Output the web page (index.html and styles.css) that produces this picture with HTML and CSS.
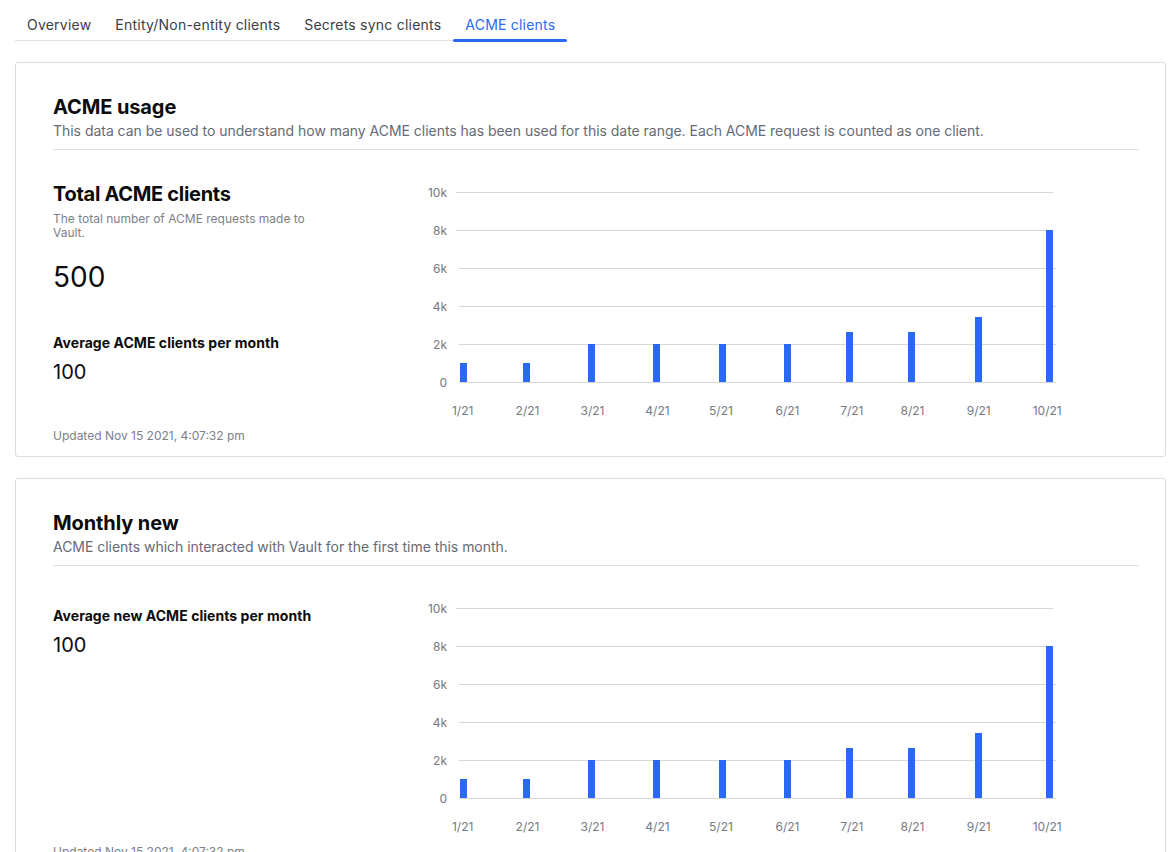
FILE: index.html
```html
<!DOCTYPE html>
<html lang="en">
<head>
<meta charset="utf-8">
<title>ACME clients</title>
<link rel="stylesheet" href="styles.css">
</head>
<body>
<div class="page">
  <nav class="tabs">
    <a class="tab">Overview</a>
    <a class="tab">Entity/Non-entity clients</a>
    <a class="tab">Secrets sync clients</a>
    <a class="tab active">ACME clients</a>
  </nav>

  <section class="card">
    <header class="card-head">
      <h2 class="card-title">ACME usage</h2>
      <p class="card-desc">This data can be used to understand how many ACME clients has been used for this date range. Each ACME request is counted as one client.</p>
    </header>
    <div class="card-body">
      <div class="stats">
        <h3 class="stat-title">Total ACME clients</h3>
        <p class="stat-desc">The total number of ACME requests made to Vault.</p>
        <p class="stat-big">500</p>
        <p class="stat-label">Average ACME clients per month</p>
        <p class="stat-value">100</p>
      </div>
      <svg class="chart" width="660" height="240" viewBox="0 0 660 240">
        <g class="grid">
          <line x1="36" y1="12.5" x2="633" y2="12.5"/>
          <line x1="36" y1="50.5" x2="633" y2="50.5"/>
          <line x1="39" y1="88.5" x2="636" y2="88.5"/>
          <line x1="39" y1="126.5" x2="636" y2="126.5"/>
          <line x1="39" y1="164.5" x2="636" y2="164.5"/>
          <line x1="39" y1="202.5" x2="636" y2="202.5"/>
        </g>
        <g class="ylab">
          <text x="27" y="17">10k</text>
          <text x="27" y="55">8k</text>
          <text x="27" y="93">6k</text>
          <text x="27" y="131">4k</text>
          <text x="27" y="169">2k</text>
          <text x="27" y="207">0</text>
        </g>
        <g class="bars">
          <rect x="40" y="183" width="7" height="19"/>
          <rect x="103" y="183" width="7" height="19"/>
          <rect x="168" y="164" width="7" height="38"/>
          <rect x="233" y="164" width="7" height="38"/>
          <rect x="299" y="164" width="7" height="38"/>
          <rect x="364" y="164" width="7" height="38"/>
          <rect x="426" y="152" width="7" height="50"/>
          <rect x="488" y="152" width="7" height="50"/>
          <rect x="555" y="137" width="7" height="65"/>
          <rect x="626" y="50" width="7" height="152"/>
        </g>
        <g class="xlab">
          <text x="42.7" y="234.5">1/21</text>
          <text x="107.5" y="234.5">2/21</text>
          <text x="172.5" y="234.5">3/21</text>
          <text x="237.5" y="234.5">4/21</text>
          <text x="301" y="234.5">5/21</text>
          <text x="367.5" y="234.5">6/21</text>
          <text x="431.8" y="234.5">7/21</text>
          <text x="492.5" y="234.5">8/21</text>
          <text x="558.7" y="234.5">9/21</text>
          <text x="627.2" y="234.5">10/21</text>
        </g>
      </svg>
    </div>
    <p class="updated">Updated Nov 15 2021, 4:07:32 pm</p>
  </section>

  <section class="card">
    <header class="card-head">
      <h2 class="card-title">Monthly new</h2>
      <p class="card-desc">ACME clients which interacted with Vault for the first time this month.</p>
    </header>
    <div class="card-body">
      <div class="stats">
        <p class="stat-label first">Average new ACME clients per month</p>
        <p class="stat-value">100</p>
      </div>
      <svg class="chart" width="660" height="240" viewBox="0 0 660 240">
        <g class="grid">
          <line x1="36" y1="12.5" x2="633" y2="12.5"/>
          <line x1="36" y1="50.5" x2="633" y2="50.5"/>
          <line x1="39" y1="88.5" x2="636" y2="88.5"/>
          <line x1="39" y1="126.5" x2="636" y2="126.5"/>
          <line x1="39" y1="164.5" x2="636" y2="164.5"/>
          <line x1="39" y1="202.5" x2="636" y2="202.5"/>
        </g>
        <g class="ylab">
          <text x="27" y="17">10k</text>
          <text x="27" y="55">8k</text>
          <text x="27" y="93">6k</text>
          <text x="27" y="131">4k</text>
          <text x="27" y="169">2k</text>
          <text x="27" y="207">0</text>
        </g>
        <g class="bars">
          <rect x="40" y="183" width="7" height="19"/>
          <rect x="103" y="183" width="7" height="19"/>
          <rect x="168" y="164" width="7" height="38"/>
          <rect x="233" y="164" width="7" height="38"/>
          <rect x="299" y="164" width="7" height="38"/>
          <rect x="364" y="164" width="7" height="38"/>
          <rect x="426" y="152" width="7" height="50"/>
          <rect x="488" y="152" width="7" height="50"/>
          <rect x="555" y="137" width="7" height="65"/>
          <rect x="626" y="50" width="7" height="152"/>
        </g>
        <g class="xlab">
          <text x="42.7" y="234.5">1/21</text>
          <text x="107.5" y="234.5">2/21</text>
          <text x="172.5" y="234.5">3/21</text>
          <text x="237.5" y="234.5">4/21</text>
          <text x="301" y="234.5">5/21</text>
          <text x="367.5" y="234.5">6/21</text>
          <text x="431.8" y="234.5">7/21</text>
          <text x="492.5" y="234.5">8/21</text>
          <text x="558.7" y="234.5">9/21</text>
          <text x="627.2" y="234.5">10/21</text>
        </g>
      </svg>
    </div>
    <p class="updated">Updated Nov 15 2021, 4:07:32 pm</p>
  </section>
</div>
</body>
</html>
```

FILE: styles.css
```css
* { box-sizing: border-box; }

html, body {
  margin: 0;
  padding: 0;
  background: #ffffff;
}

body {
  font-family: Inter, "Noto Sans", "Liberation Sans", sans-serif;
  color: #0c0c0e;
  -webkit-font-smoothing: antialiased;
}

.page {
  padding: 0 7px 0 15px;
}

/* Tabs */
.tabs {
  display: inline-flex;
  border-bottom: 1px solid #dedfe3;
  height: 41px;
}

.tab {
  position: relative;
  display: block;
  padding: 15px 12px 5px;
  font-size: 14px;
  line-height: 20px;
  letter-spacing: 0.22px;
  color: #3b3d45;
  text-decoration: none;
  white-space: nowrap;
}

.tab.active {
  color: #2b69f0;
}

.tab.active::after {
  content: "";
  position: absolute;
  left: 0;
  right: 0;
  bottom: -2px;
  height: 3px;
  border-radius: 2px;
  background: #2b69f0;
}

/* Cards */
.card {
  margin-top: 21px;
  border: 1px solid #dcdde1;
  border-radius: 3px;
  padding: 30px 26px 12px 37px;
  background: #fff;
}

.card-head {
  border-bottom: 1px solid #dedfe3;
  padding-bottom: 8px;
}

.card-title {
  margin: 0;
  font-size: 20px;
  line-height: 28px;
  font-weight: 700;
  letter-spacing: -0.1px;
}

.card-desc {
  margin: 0;
  font-size: 14px;
  line-height: 20px;
  letter-spacing: -0.03px;
  color: #656a76;
}

.card-body {
  display: flex;
  margin-top: 30px;
}

.stats {
  width: 367px;
  flex: none;
}

.stat-title {
  margin: 0;
  font-size: 20px;
  line-height: 28px;
  font-weight: 700;
  letter-spacing: -0.3px;
}

.stat-desc {
  margin: 4px 0 0;
  width: 260px;
  font-size: 12px;
  line-height: 14px;
  color: #7c808b;
}

.stat-big {
  margin: 19px 0 0;
  font-size: 28px;
  line-height: 36px;
  font-weight: 400;
}

.stat-label {
  margin: 38px 0 0;
  font-size: 14px;
  line-height: 20px;
  font-weight: 700;
  letter-spacing: 0.05px;
}

.stat-label.first {
  margin-top: 10px;
}

.stat-value {
  margin: 5px 0 0;
  font-size: 20px;
  line-height: 28px;
  font-weight: 400;
}

.chart {
  display: block;
  flex: none;
}

.grid line {
  stroke: #d6d7dd;
  stroke-width: 1;
}

.bars rect {
  fill: #2b69f5;
}

.ylab text,
.xlab text {
  font-family: Inter, "Noto Sans", "Liberation Sans", sans-serif;
  font-size: 12px;
  fill: #737884;
}

.ylab text {
  text-anchor: end;
}

.xlab text {
  text-anchor: middle;
}

.updated {
  margin: 8px 0 0;
  font-size: 12px;
  line-height: 16px;
  color: #7c808b;
}
```
